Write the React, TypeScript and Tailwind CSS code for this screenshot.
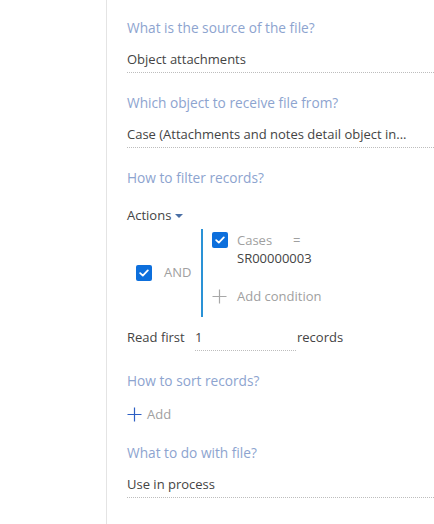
import React from 'react';

const font = { fontFamily: '"Open Sans", "Noto Sans", sans-serif' };

const Label: React.FC<{ children: React.ReactNode; className?: string }> = ({ children, className }) => (
    <div className={`text-[13.7px] leading-[20px] text-[#8da4cf] ${className ?? ''}`}>{children}</div>
);

const Field: React.FC<{ value: string; className?: string }> = ({ value, className }) => (
    <div
        className={`h-[27px] leading-[26px] text-[13px] text-[#444] border-b border-dotted border-[#bdbdbd] whitespace-nowrap overflow-hidden ${className ?? ''}`}
    >
        {value}
    </div>
);

const Check: React.FC = () => (
    <span className="w-[16px] h-[16px] rounded-[2px] bg-[#0d6fdc] flex items-center justify-center shrink-0">
        <svg width="10" height="8" viewBox="0 0 10 8" fill="none">
            <path d="M1.2 4.2 L3.8 6.6 L8.8 1.4" stroke="white" strokeWidth="1.8" strokeLinecap="round" strokeLinejoin="round" />
        </svg>
    </span>
);

const Plus: React.FC<{ color: string }> = ({ color }) => (
    <svg width="15" height="15" viewBox="0 0 15 15">
        <path d="M7.5 0.5 V14.5 M0.5 7.5 H14.5" stroke={color} strokeWidth="1.2" />
    </svg>
);

export default function App() {
    return (
        <div className="w-[434px] h-[524px] bg-white flex" style={font}>
            <div className="w-[106px] shrink-0" />
            <div className="w-px bg-[#e4e4e4] shrink-0" />
            <div className="flex-1 pl-[20px] pt-[18px]">
                <Label>What is the source of the file?</Label>
                <Field value="Object attachments" className="mt-[8px]" />

                <Label className="mt-[20px]">Which object to receive file from?</Label>
                <Field value="Case (Attachments and notes detail object in..." className="mt-[8px]" />

                <Label className="mt-[20px]">How to filter records?</Label>

                <div className="mt-[17px] flex items-center text-[13px] text-[#444] leading-[20px]">
                    Actions
                    <svg width="8" height="4" viewBox="0 0 8 4" className="ml-[4px] mt-[1px]">
                        <path d="M0 0 H8 L4 4 Z" fill="#4a6fa5" />
                    </svg>
                </div>

                <div className="mt-[4px] flex items-stretch">
                    <div className="w-[74px] flex items-center pl-[9px]">
                        <Check />
                        <span className="ml-[12px] text-[13px] text-[#a0a0a0]">AND</span>
                    </div>
                    <div className="w-[2px] bg-[#2a92d6] h-[88px]" />
                    <div className="pl-[9px] pt-[3px]">
                        <div className="flex items-start">
                            <Check />
                            <div className="ml-[9px] text-[13px] leading-[18px] -mt-[1px]">
                                <div className="text-[#a0a0a0]">
                                    Cases<span className="ml-[21px]">=</span>
                                </div>
                                <div className="text-[#444]">SR00000003</div>
                            </div>
                        </div>
                        <div className="mt-[20px] flex items-center">
                            <Plus color="#a8a8a8" />
                            <span className="ml-[10px] text-[13px] text-[#a0a0a0]">Add condition</span>
                        </div>
                    </div>
                </div>

                <div className="mt-[7px] flex items-start text-[13px] text-[#444]">
                    <span className="leading-[26px] w-[68px]">Read first</span>
                    <Field value="1" className="w-[101px]" />
                    <span className="leading-[26px] ml-[1px]">records</span>
                </div>

                <Label className="mt-[20px]">How to sort records?</Label>

                <div className="mt-[14px] flex items-center">
                    <Plus color="#2d5fc4" />
                    <span className="ml-[5px] text-[13px] text-[#a0a0a0]">Add</span>
                </div>

                <Label className="mt-[18px]">What to do with file?</Label>
                <Field value="Use in process" className="mt-[8px]" />
            </div>
        </div>
    );
}
